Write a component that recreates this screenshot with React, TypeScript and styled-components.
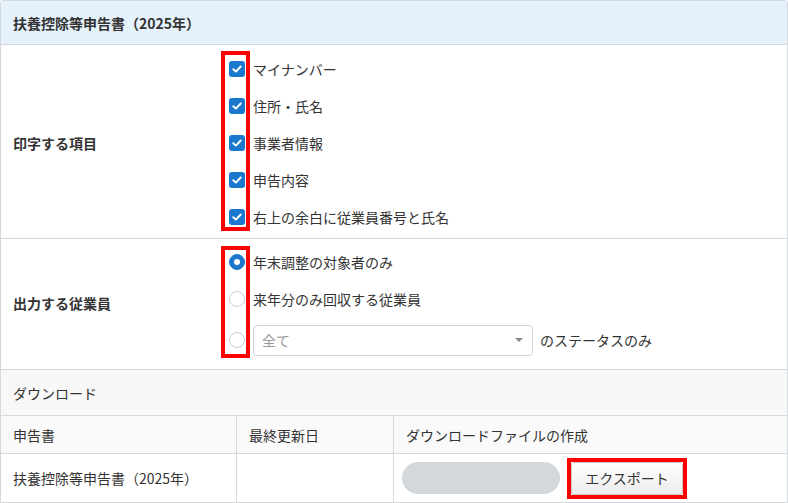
import React from 'react'
import styled, { createGlobalStyle } from 'styled-components';

const GlobalStyle = createGlobalStyle`
  html, body {
    margin: 0;
    padding: 0;
    background: #fff;
  }
  body {
    font-family: "Noto Sans CJK JP", "Noto Sans", sans-serif;
    font-size: 14px;
    color: #333;
  }
`;

const Panel = styled.div`
  width: 786px;
  border: 1px solid #d5d9de;
  border-radius: 3px 3px 0 0;
  overflow: hidden;
`;

const PanelHeader = styled.div`
  height: 43px;
  display: flex;
  align-items: center;
  padding: 0 12px;
  background: #e5f1fb;
  border-bottom: 1px solid #d5d9de;
  font-weight: 700;
  color: #333;
`;

const FormRow = styled.div<{ $padTop: number; $padBottom: number }>`
  display: flex;
  border-bottom: 1px solid #d5d9de;
  padding: ${(p) => p.$padTop}px 0 ${(p) => p.$padBottom}px;
`;

const FormLabel = styled.div`
  width: 220px;
  padding-left: 12px;
  box-sizing: border-box;
  display: flex;
  align-items: center;
  font-weight: 700;
`;

const OptionGrid = styled.div<{ $rows: string }>`
  display: grid;
  grid-template-columns: 29px auto;
  grid-template-rows: ${(p) => p.$rows};
  column-gap: 3px;
`;

// red annotation box drawn round the control column
const Highlight = styled.div<{ $top: number; $bottom: number }>`
  grid-column: 1;
  grid-row: 1 / -1;
  margin: ${(p) => p.$top}px 0 ${(p) => p.$bottom}px;
  border: 4px solid #ff0000;
`;

const ControlCell = styled.div<{ $row: number }>`
  grid-column: 1;
  grid-row: ${(p) => p.$row};
  display: flex;
  align-items: center;
  padding-left: 8px;
`;

const TextCell = styled.div<{ $row: number }>`
  grid-column: 2;
  grid-row: ${(p) => p.$row};
  display: flex;
  align-items: center;
  gap: 7px;
  white-space: nowrap;
`;

const CheckBox = styled.span`
  width: 16px;
  height: 16px;
  border-radius: 3px;
  background: #1b78cc;
  display: flex;
  align-items: center;
  justify-content: center;
`;

const Radio = styled.span<{ $checked?: boolean }>`
  width: 16px;
  height: 16px;
  box-sizing: border-box;
  border-radius: 50%;
  background: ${(p) => (p.$checked ? '#1b78cc' : '#fff')};
  border: 1px solid ${(p) => (p.$checked ? '#1b78cc' : '#c9cdd2')};
  display: flex;
  align-items: center;
  justify-content: center;
  &::after {
    content: '';
    display: ${(p) => (p.$checked ? 'block' : 'none')};
    width: 6px;
    height: 6px;
    border-radius: 50%;
    background: #fff;
  }
`;

const Select = styled.div`
  width: 280px;
  height: 31px;
  box-sizing: border-box;
  border: 1px solid #cfd3d7;
  border-radius: 4px;
  display: flex;
  align-items: center;
  justify-content: space-between;
  padding: 0 9px 0 8px;
  color: #999;
  background: #fff;
`;

const Caret = styled.span`
  width: 0;
  height: 0;
  border-left: 4px solid transparent;
  border-right: 4px solid transparent;
  border-top: 4px solid #888;
`;

const SectionBar = styled.div`
  height: 45px;
  display: flex;
  align-items: center;
  padding: 0 12px;
  background: #f8f8f8;
  border-bottom: 1px solid #d5d9de;
`;

const TableRow = styled.div<{ $head?: boolean }>`
  display: grid;
  grid-template-columns: 235px 157px 1fr;
  height: ${(p) => (p.$head ? 37 : 48)}px;
  background: ${(p) => (p.$head ? '#fafafa' : '#fff')};
  border-bottom: 1px solid #d5d9de;
`;

const Cell = styled.div<{ $pad?: number }>`
  display: flex;
  align-items: center;
  gap: 7px;
  padding-left: ${(p) => p.$pad ?? 12}px;
  & + & {
    border-left: 1px solid #d5d9de;
  }
`;

const Progress = styled.div`
  width: 158px;
  height: 32px;
  border-radius: 16px;
  background: #d3d8dd;
`;

// red annotation frame round the export button
const ButtonFrame = styled.span`
  display: flex;
  border: 4px solid #ff0000;
`;

const ExportButton = styled.button`
  width: 112px;
  height: 33px;
  border: 1px solid #c6cacf;
  border-radius: 3px;
  background: linear-gradient(#ffffff, #ececec);
  font-family: inherit;
  font-size: 14px;
  color: #333;
  padding: 0;
`;

const Check = () => (
  <svg width="12" height="12" viewBox="0 0 12 12">
    <path d="M2.3 6.2 L4.9 8.6 L9.7 3.5" fill="none" stroke="#fff" strokeWidth="1.9" strokeLinecap="round" strokeLinejoin="round" />
  </svg>
);

const printItems = ['マイナンバー', '住所・氏名', '事業者情報', '申告内容', '右上の余白に従業員番号と氏名'];

function App() {
  return (
    <>
      <GlobalStyle />
      <Panel>
        <PanelHeader>扶養控除等申告書（2025年）</PanelHeader>

        <FormRow $padTop={5} $padBottom={3}>
          <FormLabel>印字する項目</FormLabel>
          <OptionGrid $rows="repeat(5, 37px)">
            <Highlight $top={1} $bottom={4} />
            {printItems.map((item, i) => (
              <React.Fragment key={item}>
                <ControlCell $row={i + 1}>
                  <CheckBox><Check /></CheckBox>
                </ControlCell>
                <TextCell $row={i + 1}>{item}</TextCell>
              </React.Fragment>
            ))}
          </OptionGrid>
        </FormRow>

        <FormRow $padTop={4} $padBottom={6}>
          <FormLabel>出力する従業員</FormLabel>
          <OptionGrid $rows="37px 37px 46px">
            <Highlight $top={3} $bottom={5} />
            <ControlCell $row={1}><Radio $checked /></ControlCell>
            <TextCell $row={1}>年末調整の対象者のみ</TextCell>
            <ControlCell $row={2}><Radio /></ControlCell>
            <TextCell $row={2}>来年分のみ回収する従業員</TextCell>
            <ControlCell $row={3}><Radio /></ControlCell>
            <TextCell $row={3}>
              <Select>
                <span>全て</span>
                <Caret />
              </Select>
              <span>のステータスのみ</span>
            </TextCell>
          </OptionGrid>
        </FormRow>

        <SectionBar>ダウンロード</SectionBar>
        <TableRow $head>
          <Cell>申告書</Cell>
          <Cell>最終更新日</Cell>
          <Cell>ダウンロードファイルの作成</Cell>
        </TableRow>
        <TableRow>
          <Cell>扶養控除等申告書（2025年）</Cell>
          <Cell />
          <Cell $pad={8}>
            <Progress />
            <ButtonFrame>
              <ExportButton>エクスポート</ExportButton>
            </ButtonFrame>
          </Cell>
        </TableRow>
      </Panel>
    </>
  );
}

export default App
